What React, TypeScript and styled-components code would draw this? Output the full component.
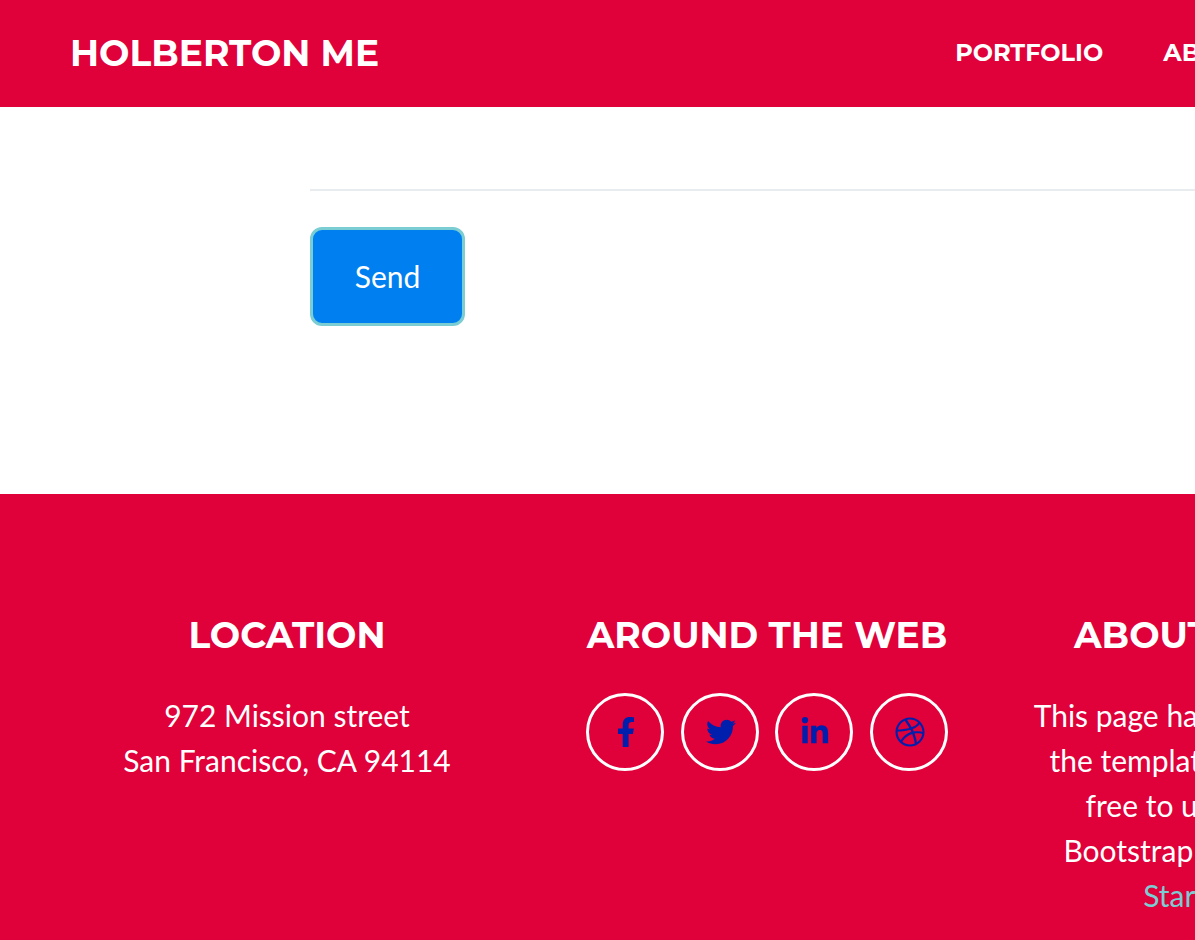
import React from "react";
import styled, { createGlobalStyle } from "styled-components";
import { FaDribbble, FaFacebookF, FaLinkedinIn, FaTwitter } from "react-icons/fa";

const headingFont = `"Montserrat", "Inter", "Liberation Sans", sans-serif`;
const bodyFont = `"Lato", "Liberation Sans", sans-serif`;

const GlobalStyle = createGlobalStyle`
  *, *::before, *::after { box-sizing: border-box; }
  html { background: #e0003a; }
  body {
    margin: 0;
    overflow-x: hidden;
    background: #fff;
    color: #212529;
    font: 400 30px/45px ${bodyFont};
  }
  h4, p { margin: 0; }
  a { text-decoration: none; }
`;

const Container = styled.div`
  min-width: 1440px;
  margin: 0 47px;
`;

const Header = styled.header`
  background: #e0003a;
  overflow: hidden;
`;

const NavBar = styled(Container)`
  display: flex;
  align-items: center;
  justify-content: space-between;
  padding: 24px 23px 25px;
`;

const Brand = styled.a`
  padding: 7px 0 6px;
  color: #fff;
  font: 700 36px/45px ${headingFont};
  text-transform: uppercase;
`;

const NavList = styled.ul`
  display: flex;
  margin: 0;
  padding: 0;
  list-style: none;
`;

const NavLink = styled.a`
  display: block;
  padding: 0 30px;
  color: #fff;
  font: 700 24px/36px ${headingFont};
  text-transform: uppercase;
`;

const Contact = styled.section`
  overflow: hidden;
  padding: 82px 0 168px;
`;

const ContactForm = styled.form`
  padding: 0 263px;
`;

const FormRule = styled.hr`
  height: 2px;
  margin: 0 0 36px;
  border: 0;
  background: #e9ecef;
`;

const SendButton = styled.button`
  display: block;
  min-width: 155px;
  padding: 24px 36px;
  border: 3px solid #79cdd3;
  border-radius: 12px;
  background: #0080f0;
  color: #fff;
  font: inherit;
  cursor: pointer;
`;

const Footer = styled.footer`
  overflow: hidden;
  padding: 120px 0;
  background: #e0003a;
  color: #fff;
  text-align: center;
`;

const Columns = styled(Container)`
  display: grid;
  grid-template-columns: repeat(3, 1fr);
`;

const Column = styled.div`
  padding: 0 24px;
`;

const ColumnTitle = styled.h4`
  margin-bottom: 36px;
  font: 700 36px/43px ${headingFont};
  text-transform: uppercase;
`;

const SocialList = styled.ul`
  display: flex;
  justify-content: space-between;
  width: 362px;
  margin: 0 auto;
  padding: 0;
  list-style: none;
`;

const SocialLink = styled.a`
  display: flex;
  align-items: center;
  justify-content: center;
  width: 78px;
  height: 78px;
  padding-left: 2px;
  border: 3px solid #fff;
  border-radius: 50%;
  color: #001fad;
`;

const TextLink = styled.a`
  color: #79cdd3;
`;

const social = [
  { label: "Facebook", Icon: FaFacebookF },
  { label: "Twitter", Icon: FaTwitter },
  { label: "LinkedIn", Icon: FaLinkedinIn },
  { label: "Dribbble", Icon: FaDribbble },
];

export default function App() {
  return (
    <>
      <GlobalStyle />
      <Header>
        <NavBar as="nav">
          <Brand href="#top">Holberton me</Brand>
          <NavList>
            <li><NavLink href="#portfolio">Portfolio</NavLink></li>
            <li><NavLink href="#about">About</NavLink></li>
            <li><NavLink href="#contact">Contact</NavLink></li>
          </NavList>
        </NavBar>
      </Header>
      <Contact id="contact">
        <Container>
          <ContactForm onSubmit={(event) => event.preventDefault()}>
            <FormRule />
            <SendButton type="submit">Send</SendButton>
          </ContactForm>
        </Container>
      </Contact>
      <Footer>
        <Columns>
          <Column>
            <ColumnTitle>Location</ColumnTitle>
            <p>972 Mission street<br />San Francisco, CA 94114</p>
          </Column>
          <Column>
            <ColumnTitle>Around the web</ColumnTitle>
            <SocialList>
              {social.map(({ label, Icon }) => (
                <li key={label}>
                  <SocialLink href="#" aria-label={label}><Icon size={30} /></SocialLink>
                </li>
              ))}
            </SocialList>
          </Column>
          <Column>
            <ColumnTitle>About this page</ColumnTitle>
            <p>
              This page has been created from<br />
              the template Freelancer. It is a<br />
              free to use, MIT licensed<br />
              Bootstrap theme created by<br />
              <TextLink href="#">Start Bootstrap</TextLink>.
            </p>
          </Column>
        </Columns>
      </Footer>
    </>
  );
}
